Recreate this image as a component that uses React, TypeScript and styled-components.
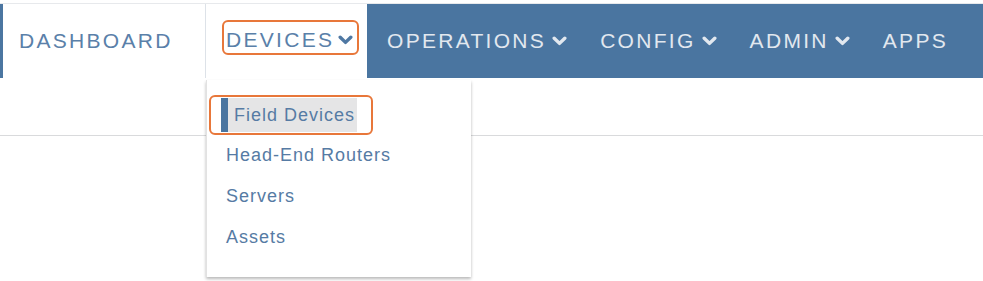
import React from "react";
import styled, { createGlobalStyle } from "styled-components";

const GlobalStyle = createGlobalStyle`
  html, body {
    margin: 0;
    padding: 0;
    background: #ffffff;
    font-family: "Liberation Sans", Arial, sans-serif;
  }
`;

const Page = styled.div`
  padding-top: 3px;
  width: 983px;
  height: 281px;
  overflow: hidden;
  box-sizing: border-box;
`;

const Header = styled.header`
  border-top: 1px solid #e7e9ec;
`;

const Nav = styled.nav`
  display: flex;
  height: 74px;
`;

const Tab = styled.div<{ $accent?: boolean; $width: number }>`
  position: relative;
  display: flex;
  align-items: center;
  box-sizing: border-box;
  width: ${(p) => p.$width}px;
  padding-left: 16px;
  border-left: ${(p) => (p.$accent ? "3px solid #4b76a1" : "none")};
  border-right: ${(p) => (p.$accent ? "1px solid #dde2e8" : "none")};
  background: #ffffff;
`;

const TabLabel = styled.span`
  font-size: 21px;
  line-height: 22px;
  letter-spacing: 2.3px;
  color: #5a80a9;
`;

const Callout = styled.span<{ $pad: string }>`
  display: inline-flex;
  align-items: center;
  border: 2px solid #e8773a;
  border-radius: 6px;
  padding: ${(p) => p.$pad};
`;

const TabCallout = styled(Callout)`
  margin-bottom: 7px;
`;

const BlueBar = styled.div`
  flex: 1;
  display: flex;
  align-items: center;
  gap: 33px;
  padding-left: 20px;
  background: #4a75a0;
`;

const BarItem = styled.span`
  display: inline-flex;
  align-items: center;
  font-size: 21px;
  line-height: 22px;
  letter-spacing: 2.3px;
  color: #e2e8ef;
`;

const ChevronSvg = styled.svg<{ $gap: number }>`
  width: 15px;
  height: 10px;
  margin-left: ${(p) => p.$gap}px;
  flex-shrink: 0;
`;

const Chevron = ({ color, gap = 7 }: { color: string; gap?: number }) => (
  <ChevronSvg $gap={gap} viewBox="0 0 15 10">
    <path
      d="M2.2 2.2 L7.5 7.4 L12.8 2.2"
      fill="none"
      stroke={color}
      strokeWidth={3.4}
      strokeLinecap="round"
      strokeLinejoin="round"
    />
  </ChevronSvg>
);

const SubBar = styled.div`
  height: 57px;
  border-bottom: 1px solid #d9dadc;
`;

const Dropdown = styled.ul`
  position: absolute;
  top: calc(100% + 2px);
  left: 0;
  z-index: 2;
  width: 265px;
  height: 197px;
  box-sizing: border-box;
  margin: 0;
  padding: 14px 0 0;
  list-style: none;
  background: #ffffff;
  border-left: 1px solid #e2e2e2;
  box-shadow: 0 2px 3px rgba(0, 0, 0, 0.28);
`;

const Item = styled.li<{ $active?: boolean }>`
  display: flex;
  align-items: center;
  height: 41px;
  padding-left: ${(p) => (p.$active ? 2 : 19)}px;
  font-size: 18px;
  letter-spacing: 1px;
  color: #567ba4;
`;

const ActiveLabel = styled.span`
  display: inline-block;
  height: 34px;
  line-height: 34px;
  padding: 0 2px 0 6px;
  border-left: 7px solid #4a75a0;
  background: #e5e5e6;
`;

const items = ["Head-End Routers", "Servers", "Assets"];

const App = () => {
  return (
    <Page>
      <GlobalStyle />
      <Header>
        <Nav>
          <Tab $accent $width={206}>
            <TabLabel>DASHBOARD</TabLabel>
          </Tab>
          <Tab $width={161}>
            <TabCallout $pad="7px 4px 2px 2px">
              <TabLabel>DEVICES</TabLabel>
              <Chevron color="#4f78a3" gap={4} />
            </TabCallout>
            <Dropdown>
              <Item $active>
                <Callout $pad="1px 14px 1px 10px">
                  <ActiveLabel>Field Devices</ActiveLabel>
                </Callout>
              </Item>
              {items.map((item) => (
                <Item key={item}>{item}</Item>
              ))}
            </Dropdown>
          </Tab>
          <BlueBar>
            <BarItem>
              OPERATIONS
              <Chevron color="#e2e8ef" gap={6} />
            </BarItem>
            <BarItem>
              CONFIG
              <Chevron color="#e2e8ef" gap={6} />
            </BarItem>
            <BarItem>
              ADMIN
              <Chevron color="#e2e8ef" gap={6} />
            </BarItem>
            <BarItem>APPS</BarItem>
          </BlueBar>
        </Nav>
        <SubBar />
      </Header>
    </Page>
  );
};

export default App;
